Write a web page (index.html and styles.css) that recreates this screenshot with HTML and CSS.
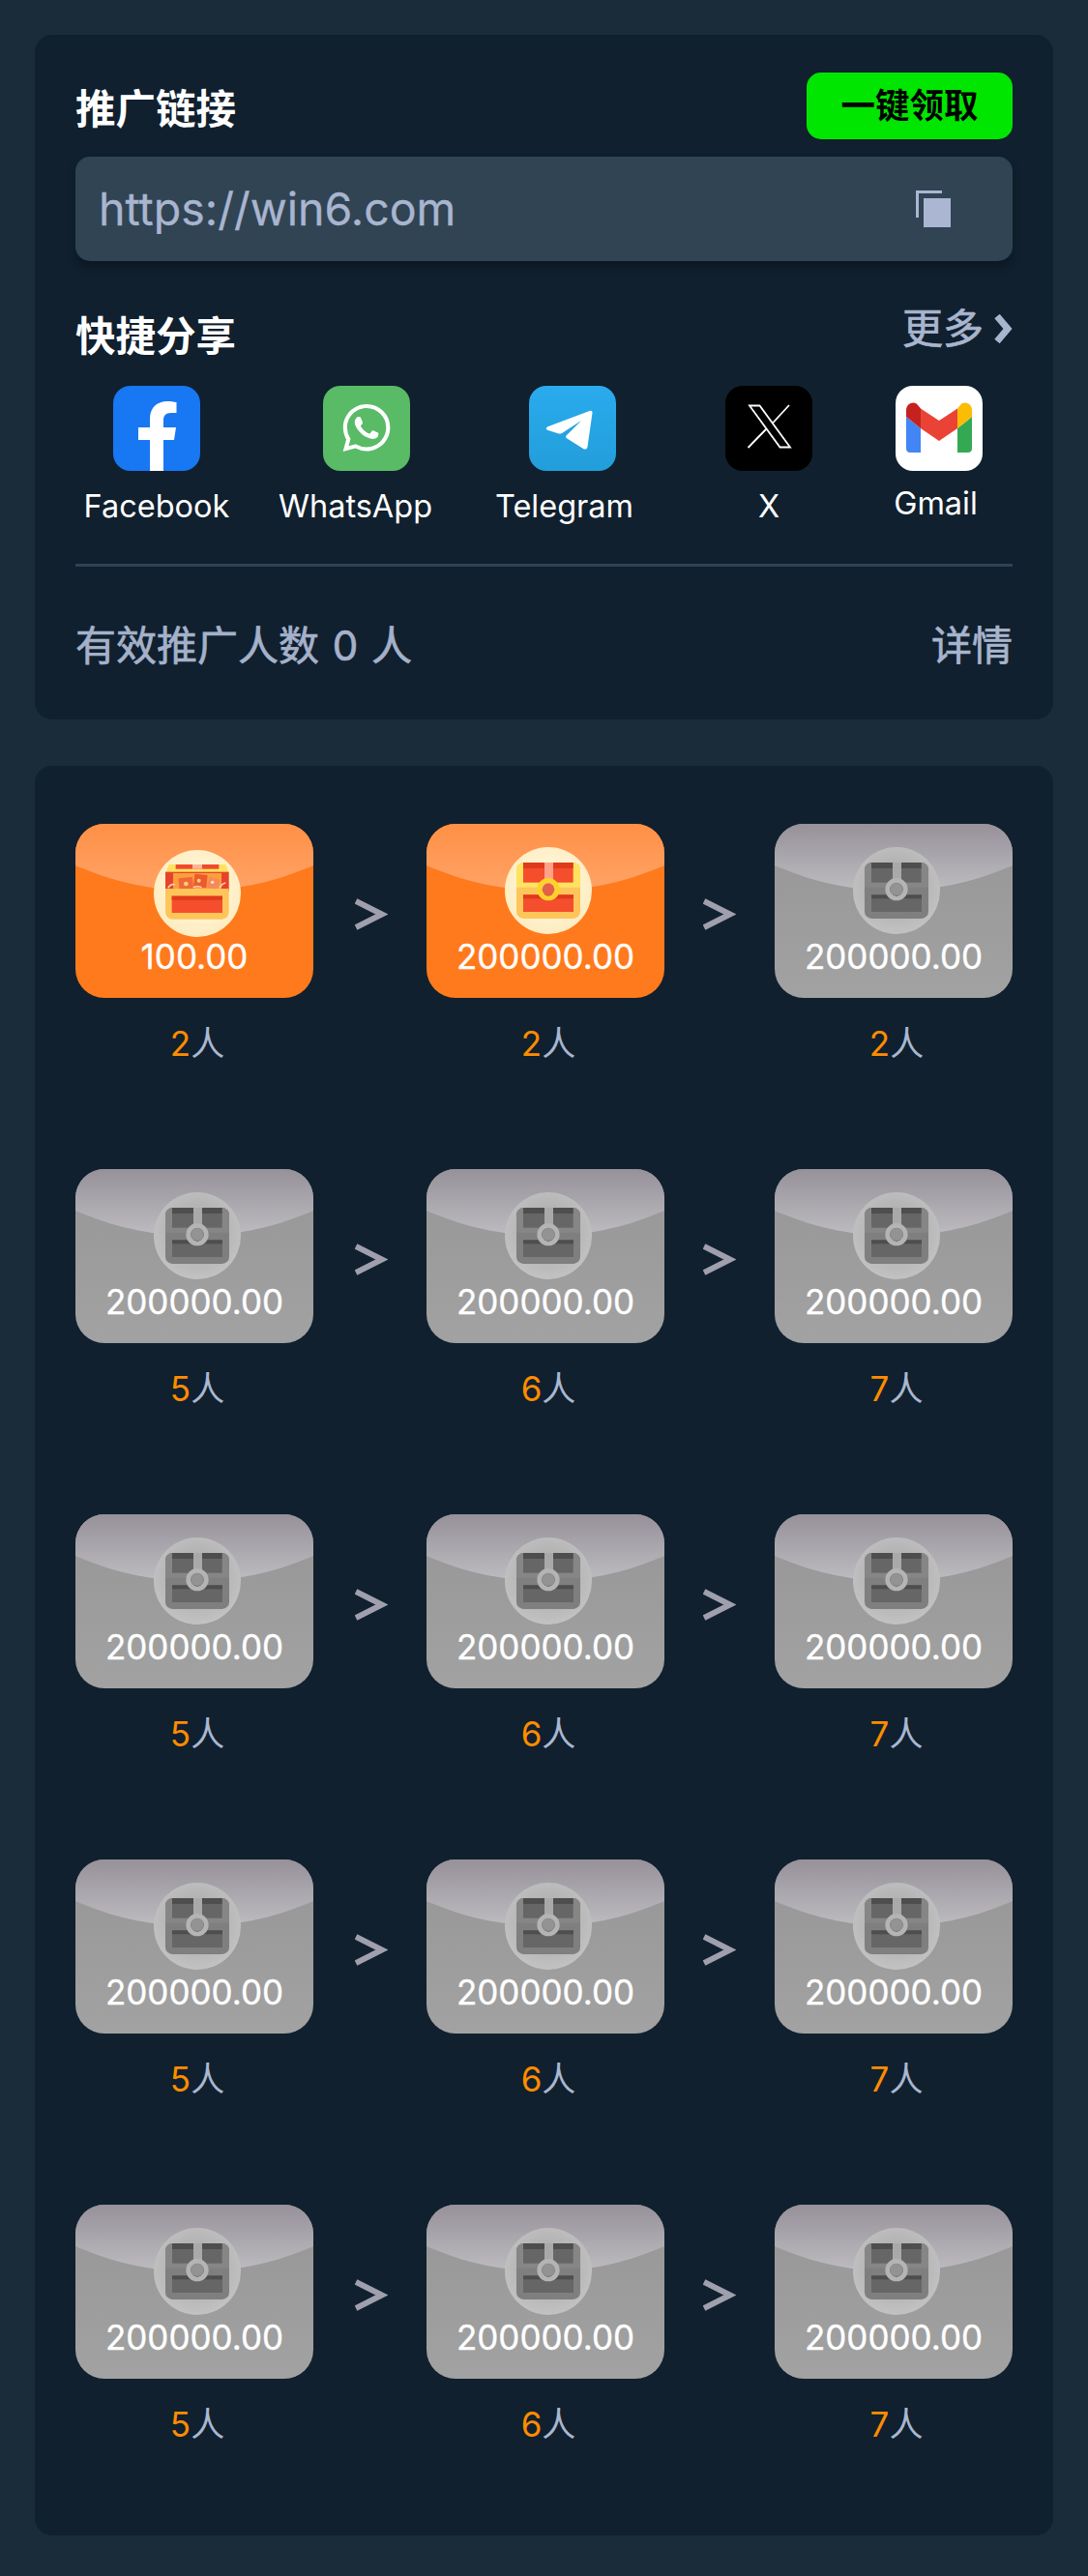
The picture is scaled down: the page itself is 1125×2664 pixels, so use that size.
FILE: index.html
```html
<!DOCTYPE html>
<html lang="zh">
<head>
<meta charset="utf-8">
<title>推广链接</title>
<link rel="stylesheet" href="styles.css">
</head>
<body>
<svg class="defs" width="0" height="0" aria-hidden="true">
  <defs>
    <symbol id="chest-closed" viewBox="0 0 270 270">
      <rect class="ch-body" x="36" y="48" width="198" height="174" rx="22"/>
      <path class="ch-lid" d="M36 125V70a22 22 0 0 1 22-22h154a22 22 0 0 1 22 22v55z"/>
      <rect class="ch-red" x="57" y="48" width="66" height="62"/>
      <rect class="ch-red" x="150" y="48" width="62" height="62"/>
      <rect class="ch-dark" x="57" y="48" width="66" height="18"/>
      <rect class="ch-dark" x="150" y="48" width="62" height="18"/>
      <rect class="ch-strap" x="123" y="48" width="27" height="60"/>
      <rect class="ch-red" x="57" y="148" width="156" height="53"/>
      <rect class="ch-dark" x="57" y="148" width="156" height="12"/>
      <circle class="ch-ring" cx="135" cy="131" r="28" stroke-width="14" fill="none"/>
      <circle class="ch-lock" cx="135" cy="131" r="19"/>
    </symbol>
  </defs>
</svg>

<main class="page">
  <section class="card promo">
    <div class="promo-head">
      <h2 class="title title-link">推广链接</h2>
      <button class="claim">一键领取</button>
    </div>
    <div class="link-box">
      <span class="link-text">https://win6.com</span>
      <svg class="copy" width="36" height="38" viewBox="0 0 36 38"><path class="copy-back" d="M0 0h27v3H3v25H0z"/><rect class="copy-front" x="8" y="8" width="28" height="30"/></svg>
    </div>
    <div class="share-head">
      <h2 class="title">快捷分享</h2>
      <a class="more">更多<svg class="chev" width="20" height="30" viewBox="0 0 20 30"><path d="M4 2l11 13L4 28" fill="none" stroke-width="7"/></svg></a>
    </div>
    <div class="share-row">
      <div class="share-item">
        <svg class="share-icon" width="90" height="88" viewBox="0 0 90 88"><rect width="90" height="88" rx="18" fill="#1877f2"/><path fill="#fff" d="M52 88V56h11l2-13H52v-7c0-5 2-8 8-8h5.500V17c-2.500-.5-6.500-1-9.500-1-10 0-18 6-18 18v9H26v13h12v32z"/></svg>
        <span class="share-label">Facebook</span>
      </div>
      <div class="share-item item-wa">
        <svg class="share-icon" width="90" height="88" viewBox="0 0 90 88"><rect width="90" height="88" rx="18" fill="#59bb66"/><g transform="translate(20.500 19) scale(2.040)"><path fill="#fff" d="M17.472 14.382c-.297-.149-1.758-.867-2.030-.967-.273-.099-.471-.148-.670.150-.197.297-.767.966-.940 1.164-.173.199-.347.223-.644.075-.297-.150-1.255-.463-2.390-1.475-.883-.788-1.480-1.761-1.653-2.059-.173-.297-.018-.458.130-.606.134-.133.298-.347.446-.520.149-.174.198-.298.298-.497.099-.198.050-.371-.025-.520-.075-.149-.669-1.612-.916-2.207-.242-.579-.487-.500-.669-.510-.173-.008-.371-.010-.570-.010-.198 0-.520.074-.792.372-.272.297-1.040 1.016-1.040 2.479 0 1.462 1.065 2.875 1.213 3.074.149.198 2.096 3.200 5.077 4.487.709.306 1.262.489 1.694.625.712.227 1.360.195 1.871.118.571-.085 1.758-.719 2.006-1.413.248-.694.248-1.289.173-1.413-.074-.124-.272-.198-.570-.347m-5.421 7.403h-.004a9.870 9.870 0 0 1-5.031-1.378l-.361-.214-3.741.982.998-3.648-.235-.374a9.860 9.860 0 0 1-1.510-5.260c.001-5.450 4.436-9.884 9.888-9.884 2.640 0 5.122 1.030 6.988 2.898a9.825 9.825 0 0 1 2.893 6.994c-.003 5.450-4.437 9.884-9.885 9.884m8.413-18.297A11.815 11.815 0 0 0 12.050 0C5.495 0 .160 5.335.157 11.892c0 2.096.547 4.142 1.588 5.945L.057 24l6.305-1.654a11.882 11.882 0 0 0 5.683 1.448h.005c6.554 0 11.890-5.335 11.893-11.893a11.821 11.821 0 0 0-3.480-8.413z"/></g></svg>
        <span class="share-label label-wa">WhatsApp</span>
      </div>
      <div class="share-item item-tg">
        <svg class="share-icon" width="90" height="88" viewBox="0 0 90 88"><defs><linearGradient id="tg" x1="0" y1="0" x2="0" y2="1"><stop offset="0" stop-color="#2aabee"/><stop offset="1" stop-color="#229ed9"/></linearGradient></defs><rect width="90" height="88" rx="18" fill="url(#tg)"/><path fill="#fff" d="M65.500 28c.4-1.800-1.200-2.800-3-2L20 42c-3 1.200-2.800 3.200 0 4l10 3.300c1.500.5 3 .2 4-.4L54 36 38.500 51.500c-.8 1-.6 2 .5 2.700L56 65c2 1.200 4 .6 4.500-2z"/></svg>
        <span class="share-label label-tg">Telegram</span>
      </div>
      <div class="share-item item-x">
        <svg class="share-icon" width="90" height="88" viewBox="0 0 90 88"><rect width="90" height="88" rx="18" fill="#000"/><path fill="none" stroke="#fff" stroke-width="1.800" d="M25 20.500h10.500L67 63.500H56.500zM66 20l-17.500 19M42 45L23.500 64"/></svg>
        <span class="share-label">X</span>
      </div>
      <div class="share-item item-gm">
        <svg class="share-icon" width="90" height="88" viewBox="0 0 90 88"><rect width="90" height="88" rx="18" fill="#fff"/><path fill="#4285f4" d="M11 32v33c0 2.500 1.800 4 4 4h11V44z"/><path fill="#34a853" d="M64 44v25h11c2.200 0 4-1.500 4-4V32z"/><path fill="#ea4335" d="M26 23.500L45 36l19-12.500V44L45 57 26 44z"/><path fill="#c5221f" d="M11 32v-7c0-6 6.500-9.500 11-6.300l4 4.800V44z"/><path fill="#fbbc04" d="M64 23.500l4-4.800c4.500-3.200 11 .3 11 6.300v7L64 44z"/></svg>
        <span class="share-label label-gm">Gmail</span>
      </div>
    </div>
    <div class="divider"></div>
    <div class="stats">
      <span>有效推广人数 0 人</span>
      <a class="detail">详情</a>
    </div>
  </section>

  <section class="card rewards">
    <!-- row 1 -->
    <div class="reward">
      <div class="env env-on">
        <div class="coin coin-open">
          <svg width="90" height="90" viewBox="0 0 270 270">
            <path fill="#ffe25f" d="M48 45h175l10 25v60H36V70z"/>
            <rect x="68" y="45" width="134" height="14" fill="#f04a2c"/>
            <rect x="120" y="45" width="30" height="14" fill="#ffb39a"/>
            <rect x="36" y="68" width="197" height="60" fill="#e8432a"/>
            <rect x="60" y="72" width="150" height="52" fill="#f9a03c"/>
            <rect x="78" y="86" width="44" height="38" rx="3" fill="#f0683a" transform="rotate(-6 100 105)"/>
            <circle cx="100" cy="105" r="7" fill="#ffd36b"/>
            <rect x="125" y="76" width="40" height="40" rx="3" fill="#ee5a30" transform="rotate(6 145 96)"/>
            <circle cx="140" cy="95" r="6" fill="#ffd36b"/>
            <rect x="168" y="88" width="34" height="32" rx="3" fill="#f58a5a" transform="rotate(14 185 104)"/>
            <circle cx="182" cy="100" r="5" fill="#ffe3b0"/>
            <path fill="none" stroke="#ffd2c4" stroke-width="4" d="M44 118q10-16 22-10M122 116q14-6 26 0M205 118q6-14 18-16"/>
            <path fill="#fdc55a" d="M36 120h197v73a22 22 0 0 1-22 22H58a22 22 0 0 1-22-22z"/>
            <rect x="56" y="143" width="157" height="52" fill="#f44e2d"/>
            <rect x="56" y="143" width="157" height="12" fill="#df3a1c"/>
          </svg>
        </div>
        <span class="amount">100.00</span>
      </div>
      <p class="count"><b>2</b>人</p>
    </div>
    <svg class="arrow arrow-a" width="34" height="33" viewBox="0 0 34 33"><path d="M1 3l27 13.500L1 30" fill="none" stroke-width="6"/></svg>
    <div class="reward">
      <div class="env env-on"><div class="coin"><svg width="90" height="90"><use href="#chest-closed"/></svg></div><span class="amount">200000.00</span></div>
      <p class="count"><b>2</b>人</p>
    </div>
    <svg class="arrow arrow-b" width="34" height="33" viewBox="0 0 34 33"><path d="M1 3l27 13.500L1 30" fill="none" stroke-width="6"/></svg>
    <div class="reward">
      <div class="env env-off"><div class="coin"><svg width="90" height="90"><use href="#chest-closed"/></svg></div><span class="amount">200000.00</span></div>
      <p class="count"><b>2</b>人</p>
    </div>
    <!-- row 2 -->
    <div class="reward">
      <div class="env env-off"><div class="coin"><svg width="90" height="90"><use href="#chest-closed"/></svg></div><span class="amount">200000.00</span></div>
      <p class="count"><b>5</b>人</p>
    </div>
    <svg class="arrow arrow-a" width="34" height="33" viewBox="0 0 34 33"><path d="M1 3l27 13.500L1 30" fill="none" stroke-width="6"/></svg>
    <div class="reward">
      <div class="env env-off"><div class="coin"><svg width="90" height="90"><use href="#chest-closed"/></svg></div><span class="amount">200000.00</span></div>
      <p class="count"><b>6</b>人</p>
    </div>
    <svg class="arrow arrow-b" width="34" height="33" viewBox="0 0 34 33"><path d="M1 3l27 13.500L1 30" fill="none" stroke-width="6"/></svg>
    <div class="reward">
      <div class="env env-off"><div class="coin"><svg width="90" height="90"><use href="#chest-closed"/></svg></div><span class="amount">200000.00</span></div>
      <p class="count"><b>7</b>人</p>
    </div>
    <!-- row 3 -->
    <div class="reward">
      <div class="env env-off"><div class="coin"><svg width="90" height="90"><use href="#chest-closed"/></svg></div><span class="amount">200000.00</span></div>
      <p class="count"><b>5</b>人</p>
    </div>
    <svg class="arrow arrow-a" width="34" height="33" viewBox="0 0 34 33"><path d="M1 3l27 13.500L1 30" fill="none" stroke-width="6"/></svg>
    <div class="reward">
      <div class="env env-off"><div class="coin"><svg width="90" height="90"><use href="#chest-closed"/></svg></div><span class="amount">200000.00</span></div>
      <p class="count"><b>6</b>人</p>
    </div>
    <svg class="arrow arrow-b" width="34" height="33" viewBox="0 0 34 33"><path d="M1 3l27 13.500L1 30" fill="none" stroke-width="6"/></svg>
    <div class="reward">
      <div class="env env-off"><div class="coin"><svg width="90" height="90"><use href="#chest-closed"/></svg></div><span class="amount">200000.00</span></div>
      <p class="count"><b>7</b>人</p>
    </div>
    <!-- row 4 -->
    <div class="reward">
      <div class="env env-off"><div class="coin"><svg width="90" height="90"><use href="#chest-closed"/></svg></div><span class="amount">200000.00</span></div>
      <p class="count"><b>5</b>人</p>
    </div>
    <svg class="arrow arrow-a" width="34" height="33" viewBox="0 0 34 33"><path d="M1 3l27 13.500L1 30" fill="none" stroke-width="6"/></svg>
    <div class="reward">
      <div class="env env-off"><div class="coin"><svg width="90" height="90"><use href="#chest-closed"/></svg></div><span class="amount">200000.00</span></div>
      <p class="count"><b>6</b>人</p>
    </div>
    <svg class="arrow arrow-b" width="34" height="33" viewBox="0 0 34 33"><path d="M1 3l27 13.500L1 30" fill="none" stroke-width="6"/></svg>
    <div class="reward">
      <div class="env env-off"><div class="coin"><svg width="90" height="90"><use href="#chest-closed"/></svg></div><span class="amount">200000.00</span></div>
      <p class="count"><b>7</b>人</p>
    </div>
    <!-- row 5 -->
    <div class="reward">
      <div class="env env-off"><div class="coin"><svg width="90" height="90"><use href="#chest-closed"/></svg></div><span class="amount">200000.00</span></div>
      <p class="count"><b>5</b>人</p>
    </div>
    <svg class="arrow arrow-a" width="34" height="33" viewBox="0 0 34 33"><path d="M1 3l27 13.500L1 30" fill="none" stroke-width="6"/></svg>
    <div class="reward">
      <div class="env env-off"><div class="coin"><svg width="90" height="90"><use href="#chest-closed"/></svg></div><span class="amount">200000.00</span></div>
      <p class="count"><b>6</b>人</p>
    </div>
    <svg class="arrow arrow-b" width="34" height="33" viewBox="0 0 34 33"><path d="M1 3l27 13.500L1 30" fill="none" stroke-width="6"/></svg>
    <div class="reward">
      <div class="env env-off"><div class="coin"><svg width="90" height="90"><use href="#chest-closed"/></svg></div><span class="amount">200000.00</span></div>
      <p class="count"><b>7</b>人</p>
    </div>
  </section>
</main>
</body>
</html>
```
FILE: styles.css
```css
* { box-sizing: border-box; }
html, body { margin: 0; padding: 0; }
body {
  width: 1125px;
  height: 2664px;
  background: #1a2c3a;
  font-family: Inter, "Noto Sans CJK SC", sans-serif;
  color: #fff;
  overflow: hidden;
}
.defs { display: block; height: 0; }
.page {
  display: flex;
  flex-direction: column;
  gap: 48px;
  padding: 36px 36px 42px;
}
.card {
  background: #10202e;
  border-radius: 18px;
}

/* promo card */
.promo { padding: 39px 42px 0; height: 708px; }
.promo-head {
  display: flex;
  justify-content: space-between;
  align-items: center;
  height: 69px;
}
.title {
  margin: 0;
  font-size: 41.500px;
  line-height: 60px;
  font-weight: 700;
}
.title-link { padding-top: 6px; }
.claim {
  width: 213px;
  height: 69px;
  border: 0;
  border-radius: 15px;
  background: #00e600;
  color: #000;
  font: 700 35.500px/69px Inter, "Noto Sans CJK SC", sans-serif;
  padding: 0;
}
.link-box {
  display: flex;
  justify-content: space-between;
  align-items: center;
  margin-top: 18px;
  height: 108px;
  padding: 0 64px 0 24px;
  background: #304454;
  border-radius: 15px;
  box-shadow: 0 6px 10px rgba(0, 0, 0, .25);
}
.link-text {
  font-size: 46.500px;
  color: #a9b5cf;
  -webkit-text-stroke: .3px #a9b5cf;
}
.copy-back, .copy-front { fill: #aab6d2; }
.share-head {
  display: flex;
  justify-content: space-between;
  align-items: flex-start;
  margin-top: 48px;
  height: 60px;
}
.more {
  display: flex;
  align-items: center;
  font-size: 42px;
  line-height: 44px;
  color: #a9b5cf;
  -webkit-text-stroke: .7px #a9b5cf;
}
.chev { margin-left: 10px; stroke: #a9b5cf; }
.share-row {
  display: flex;
  margin-top: 21px;
  padding-left: 39px;
  height: 142px;
}
.share-item {
  display: flex;
  flex-direction: column;
  align-items: center;
  width: 90px;
}
.item-wa { margin-left: 127px; }
.item-tg { margin-left: 123px; }
.item-x { margin-left: 113px; }
.item-gm { margin-left: 86px; }
.share-icon { display: block; flex: none; }
.share-label {
  flex: none;
  margin-top: 17px;
  font-size: 32.500px;
  line-height: 40px;
  color: #fff;
  white-space: nowrap;
}
.label-wa { margin-right: 23px; }
.label-tg { margin-right: 17px; }
.label-gm { margin-top: 14px; margin-right: 7px; }
.divider {
  margin-top: 42px;
  height: 3px;
  background: #2e4353;
}
.stats {
  display: flex;
  justify-content: space-between;
  align-items: center;
  height: 158px;
  padding-bottom: 2px;
  font-size: 42px;
  color: #a5b1ca;
  -webkit-text-stroke: .7px #a5b1ca;
  word-spacing: 2px;
}
.detail { color: #a9b5cf; }

/* rewards card */
.rewards {
  display: grid;
  grid-template-columns: 246px 117px 246px 114px 246px;
  row-gap: 106px;
  align-items: start;
  padding: 60px 42px 92px;
  height: 1830px;
}
.reward { width: 246px; }
.env {
  position: relative;
  display: flex;
  flex-direction: column;
  align-items: center;
  height: 180px;
  border-radius: 30px;
  overflow: hidden;
}
.env::before {
  content: "";
  position: absolute;
  left: -181px;
  top: -539px;
  width: 608px;
  height: 608px;
  border-radius: 50%;
}
.env-on { background: #ff7a1c; }
.env-on::before { background: linear-gradient(to bottom, #ff9046 539px, #ffa366 608px); }
.env-off { background: linear-gradient(to bottom, #969696, #a2a2a2); }
.env-off::before { background: linear-gradient(to bottom, #97919a 539px, #bdbcc0 608px); }
.coin {
  position: relative;
  width: 90px;
  height: 90px;
  margin: 24px 0 0 6px;
  border-radius: 50%;
  flex: none;
}
.coin svg { display: block; }
.coin-open { margin-top: 27px; margin-bottom: -3px; }
.env-on .coin {
  background: radial-gradient(circle at 50% 45%, #fff5d6 30%, #fde7b4 100%);
  --body: #fdc55a; --lid: #ffe25f; --red: #f44e2d; --dark: #df3a1c;
  --strap: #ffa288; --ring: #fdd32a; --lock: #e2614a;
}
.env-off .coin {
  background: radial-gradient(circle at 50% 45%, #b4b4b4 40%, #cdcdcd 100%);
  --body: #7f7f7f; --lid: #868686; --red: #666; --dark: #4e4e4e;
  --strap: #a9a9a9; --ring: #b4b4b4; --lock: #939393;
}
.ch-body { fill: var(--body); }
.ch-lid { fill: var(--lid); }
.ch-red { fill: var(--red); }
.ch-dark { fill: var(--dark); }
.ch-strap { fill: var(--strap); }
.ch-ring { stroke: var(--ring); }
.ch-lock { fill: var(--lock); }
.amount {
  position: relative;
  font-size: 35px;
  line-height: 47px;
  color: #fff;
  -webkit-text-stroke: .3px #fff;
}
.count {
  margin: 23px 0 0;
  padding-left: 6px;
  text-align: center;
  font-size: 35px;
  line-height: 48px;
  color: #a9b7d0;
}
.count b { font-weight: 400; color: #ff8c00; }
.arrow {
  display: block;
  margin-top: 77px;
  stroke: #a09fae;
}
.arrow-a { margin-left: 43px; }
.arrow-b { margin-left: 40px; }
```
